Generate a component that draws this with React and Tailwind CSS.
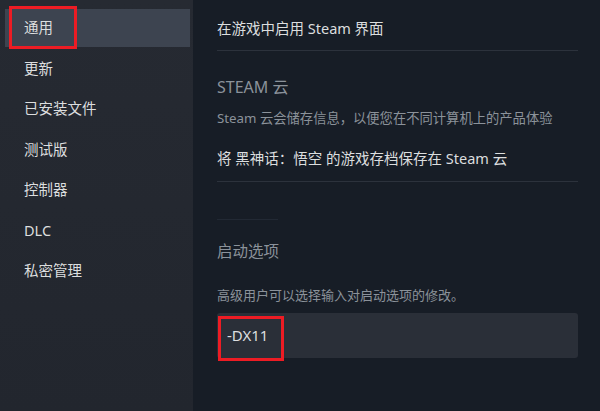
const navItems = ["通用", "更新", "已安装文件", "测试版", "控制器", "DLC", "私密管理"];

export default function App() {
  return (
    <div
      className="relative flex w-[600px] h-[411px] overflow-hidden bg-[#171d26]"
      style={{ fontFamily: '"Noto Sans", "Noto Sans CJK SC", sans-serif' }}
    >
      {/* sidebar */}
      <div className="w-[193px] shrink-0 bg-gradient-to-b from-[#262a32] to-[#22262e] pl-[5px] pr-[3px] pt-[9px] flex flex-col gap-[2.5px]">
        {navItems.map((item, i) => (
          <div
            key={item}
            className={
              "h-[38px] flex items-center pl-[19px] text-[14.5px] text-[#dcdedf] " +
              (i === 0 ? "bg-[#3d4450]" : "")
            }
          >
            {item}
          </div>
        ))}
      </div>

      {/* settings panel */}
      <div className="flex-1 pl-[24px] pr-[22px] pt-[7px]">
        <div className="h-[44px] flex items-center border-b border-[#2c323c] text-[14.5px] text-[#dcdedf]">
          在游戏中启用 Steam 界面
        </div>

        <div className="border-b border-[#2c323c] pb-[13px]">
          <p className="mt-[26px] leading-[20px] text-[16px] text-[#8b929a]">STEAM 云</p>
          <p className="mt-[12px] leading-[18px] text-[13.3px] text-[#8b929a]">
            Steam 云会储存信息，以便您在不同计算机上的产品体验
          </p>
          <p className="mt-[21px] leading-[20px] text-[14.5px] text-[#dcdedf]">
            将 黑神话：悟空 的游戏存档保存在 Steam 云
          </p>
        </div>

        <div className="mt-[37px] w-[61px] h-px bg-[#222934]" />

        <p className="mt-[20px] leading-[22px] text-[15.5px] text-[#8b929a]">启动选项</p>
        <p className="mt-[24px] leading-[18px] text-[13px] text-[#8b929a]">
          高级用户可以选择输入对启动选项的修改。
        </p>
        <div className="mt-[9px] h-[45px] rounded-[3px] bg-[#2a2f38] flex items-center pl-[10px] text-[15px] text-[#dcdedf]">
          -DX11
        </div>
      </div>

      {/* annotation boxes */}
      <div className="absolute left-[9px] top-[6px] w-[68px] h-[43px] border-[3px] border-[#ed1c24]" />
      <div className="absolute left-[218px] top-[316px] w-[66px] h-[45px] border-[3px] border-[#ed1c24]" />
    </div>
  );
}
